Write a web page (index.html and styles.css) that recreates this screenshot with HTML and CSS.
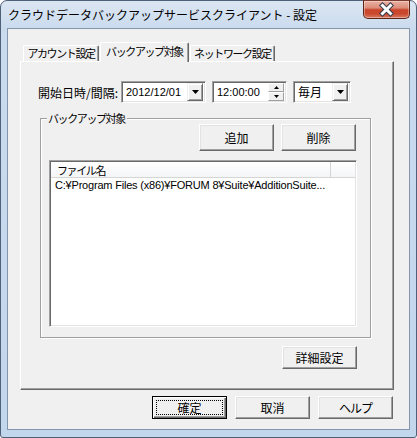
FILE: index.html
```html
<!DOCTYPE html>
<html lang="ja">
<head>
<meta charset="utf-8">
<title>設定</title>
<link rel="stylesheet" href="styles.css">
</head>
<body>
<div class="window">
  <div class="titlebar">
    <span class="title">クラウドデータバックアップサービスクライアント - 設定</span>
    <div class="close">
      <svg width="45" height="17" viewBox="0 0 45 17">
        <path d="M18.5 4.5 L26.5 12.5 M26.5 4.5 L18.5 12.5" stroke="#3a3a4a" stroke-width="5" stroke-linecap="square" fill="none"/>
        <path d="M18.5 4.5 L26.5 12.5 M26.5 4.5 L18.5 12.5" stroke="#ffffff" stroke-width="3" stroke-linecap="square" fill="none"/>
      </svg>
    </div>
  </div>
  <div class="client">
    <div class="tabs">
      <div class="tab t1"><span class="narrow">アカウント設定</span></div>
      <div class="tab t2 active"><span class="narrow">バックアップ対象</span></div>
      <div class="tab t3"><span class="narrow">ネットワーク設定</span></div>
    </div>
    <div class="panel">
      <div class="schedule">
        <span class="sched-label">開始日時/間隔:</span>
        <div class="field combo date">
          <span class="value latin">2012/12/01</span>
          <span class="ddbtn"><svg width="7" height="4" viewBox="0 0 7 4"><path d="M0 0H7L3.5 4Z" fill="#000"/></svg></span>
        </div>
        <div class="field time">
          <span class="value latin">12:00:00</span>
          <span class="spin">
            <span class="spin-btn"><svg width="5" height="3" viewBox="0 0 5 3"><path d="M2.5 0L5 3H0Z" fill="#000"/></svg></span>
            <span class="spin-btn"><svg width="5" height="3" viewBox="0 0 5 3"><path d="M0 0H5L2.5 3Z" fill="#000"/></svg></span>
          </span>
        </div>
        <div class="field combo interval">
          <span class="value">毎月</span>
          <span class="ddbtn"><svg width="7" height="4" viewBox="0 0 7 4"><path d="M0 0H7L3.5 4Z" fill="#000"/></svg></span>
        </div>
      </div>
      <div class="group">
        <span class="group-title narrow">バックアップ対象</span>
        <div class="group-buttons">
          <button class="btn">追加</button>
          <button class="btn">削除</button>
        </div>
        <div class="list">
          <div class="list-header">
            <div class="col-name"><span class="narrow">ファイル名</span></div>
            <div class="col-rest"></div>
          </div>
          <div class="list-row latin">C:¥Program Files (x86)¥FORUM 8¥Suite¥AdditionSuite...</div>
        </div>
      </div>
      <div class="panel-footer">
        <button class="btn">詳細設定</button>
      </div>
    </div>
    <div class="dialog-buttons">
      <button class="btn default"><span class="focus">確定</span></button>
      <button class="btn">取消</button>
      <button class="btn"><span class="narrow-s">ヘルプ</span></button>
    </div>
  </div>
</div>
</body>
</html>
```

FILE: styles.css
```css
* { box-sizing: border-box; }
html, body { margin: 0; padding: 0; }
body {
  width: 417px;
  height: 438px;
  overflow: hidden;
  background: #ffffff;
  font-family: "Noto Sans CJK JP", sans-serif;
  font-size: 12px;
  color: #000;
}
.latin { font-family: "Liberation Sans", "Noto Sans CJK JP", sans-serif; font-size: 11px; }
.narrow { font-size: 11px; letter-spacing: -1.4px; }
.narrow-s { letter-spacing: -1px; }

.window {
  width: 417px;
  height: 438px;
  border: 1px solid #4f6079;
  border-radius: 7px 7px 3px 3px;
  background: linear-gradient(to bottom, #dce6f2 0px, #cadbee 28px, #c2d6ec 100%);
  padding: 0 6px 7px 6px;
  display: flex;
  flex-direction: column;
}
.titlebar {
  height: 27px;
  display: flex;
  justify-content: space-between;
  align-items: flex-start;
  flex: none;
}
.title {
  margin: 6px 0 0 1px;
  line-height: 16px;
  font-size: 12px;
  color: #000;
  white-space: nowrap;
}
.close {
  width: 47px;
  height: 19px;
  margin-top: -1px;
  border: 1px solid #5d2418;
  border-top-color: #7a3a2d;
  border-radius: 0 0 5px 5px;
  background: linear-gradient(to bottom, #eab0a2 0%, #dc8d7b 40%, #c8452c 52%, #c9492f 75%, #d97d62 100%);
  box-shadow: inset 0 0 0 1px rgba(255,255,255,0.35);
  display: flex;
  align-items: center;
  justify-content: center;
}
.close svg { display: block; }

.client {
  flex: 1;
  background: #f0f0f0;
  border: 1px solid #8496ad;
  display: flex;
  flex-direction: column;
}

.tabs {
  display: flex;
  align-items: flex-end;
  height: 20px;
  margin: 13px 0 0 15px;
  position: relative;
  z-index: 1;
}
.tab {
  height: 16px;
  margin-bottom: 1px;
  background: #f0f0f0;
  border-top: 1px solid #fff;
  border-left: 1px solid #fff;
  border-right: 1px solid #696969;
  border-radius: 2px 2px 0 0;
  box-shadow: inset -1px 0 0 #a0a0a0;
  line-height: 14px;
  text-align: center;
  white-space: nowrap;
}
.t1 { width: 76px; }
.t2 { width: 89px; margin-left: 1px; }
.t3 { width: 85px; margin-left: 1px; }
.tab.active {
  height: 20px;
  margin-bottom: 0;
  padding-bottom: 3px;
  line-height: 16px;
}

.panel {
  margin: -1px 0 0 12px;
  width: 374px;
  height: 329px;
  border: 1px solid;
  border-color: #fff #696969 #696969 #fff;
  box-shadow: inset -1px -1px 0 #a0a0a0;
  display: flex;
  flex-direction: column;
}

.schedule {
  display: flex;
  align-items: center;
  height: 22px;
  margin-top: 19px;
  padding-left: 17px;
}
.sched-label { width: 83px; white-space: nowrap; }

.field {
  height: 22px;
  background: #fff;
  border: 1px solid;
  border-color: #a0a0a0 #fff #fff #a0a0a0;
  box-shadow: inset 1px 1px 0 #696969, inset -1px -1px 0 #e3e3e3;
  padding: 2px;
  display: flex;
  align-items: center;
}
.field .value { flex: 1; padding-left: 2px; line-height: 16px; white-space: nowrap; }
.date { width: 85px; }
.time { width: 75px; margin-left: 6px; }
.interval { width: 58px; margin-left: 6px; }

.ddbtn {
  width: 16px;
  height: 18px;
  background: #f0f0f0;
  border: 1px solid;
  border-color: #f0f0f0 #696969 #696969 #f0f0f0;
  box-shadow: inset 1px 1px 0 #fff, inset -1px -1px 0 #a0a0a0;
  display: flex;
  align-items: center;
  justify-content: center;
}
.ddbtn svg, .spin-btn svg { display: block; }

.spin {
  width: 16px;
  height: 18px;
  display: flex;
  flex-direction: column;
}
.spin-btn {
  flex: 1;
  background: #f0f0f0;
  border: 1px solid;
  border-color: #fff #a0a0a0 #a0a0a0 #fff;
  display: flex;
  align-items: center;
  justify-content: center;
}

.group {
  margin: 15px 0 0 19px;
  width: 331px;
  height: 220px;
  border: 1px solid #a0a0a0;
  box-shadow: inset 1px 1px 0 #fff, 1px 1px 0 #fff;
  display: flex;
  flex-direction: column;
}
.group-title {
  display: block;
  width: max-content;
  height: 13px;
  line-height: 13px;
  margin: -7px 0 0 6px;
  padding: 0 2px 0 1px;
  background: #f0f0f0;
  white-space: nowrap;
}
.group-buttons {
  display: flex;
  justify-content: flex-end;
  gap: 7px;
  margin: -1px 14px 0 0;
}
.group-buttons .btn { height: 27px; }

.btn {
  width: 75px;
  height: 23px;
  padding: 0;
  margin: 0;
  background: #f0f0f0;
  border: 1px solid;
  border-color: #fff #696969 #696969 #fff;
  box-shadow: inset -1px -1px 0 #a0a0a0, inset 1px 1px 0 #e3e3e3;
  font: inherit;
  color: #000;
  display: flex;
  align-items: center;
  justify-content: center;
  line-height: 14px;
}
.btn.default {
  border-color: #000;
  box-shadow: inset 1px 1px 0 #fff, inset -1px -1px 0 #696969, inset -2px -2px 0 #a0a0a0;
  padding: 3px;
}
.btn .focus {
  flex: 1;
  align-self: stretch;
  border: 1px dotted #000;
  display: flex;
  align-items: center;
  justify-content: center;
}

.list {
  margin: 9px 0 0 8px;
  width: 308px;
  height: 167px;
  background: #fff;
  border: 1px solid;
  border-color: #a0a0a0 #fff #fff #a0a0a0;
  box-shadow: inset 1px 1px 0 #696969, inset -1px -1px 0 #e3e3e3;
  padding: 1px;
}
.list-header {
  display: flex;
  height: 16px;
  background: linear-gradient(to bottom, #ffffff, #f4f5f7);
  border-bottom: 1px solid #d5d5d5;
}
.col-name {
  width: 280px;
  padding-left: 6px;
  line-height: 15px;
  border-right: 1px solid #d5d5d5;
  white-space: nowrap;
}
.col-rest { flex: 1; }
.list-row {
  padding-left: 4px;
  height: 15px;
  line-height: 15px;
  white-space: nowrap;
  overflow: hidden;
  letter-spacing: -0.2px;
}

.panel-footer {
  display: flex;
  justify-content: flex-end;
  margin: 8px 36px 0 0;
}

.dialog-buttons {
  display: flex;
  justify-content: flex-end;
  gap: 8px;
  margin-top: 6px;
  padding-right: 16px;
}
```
